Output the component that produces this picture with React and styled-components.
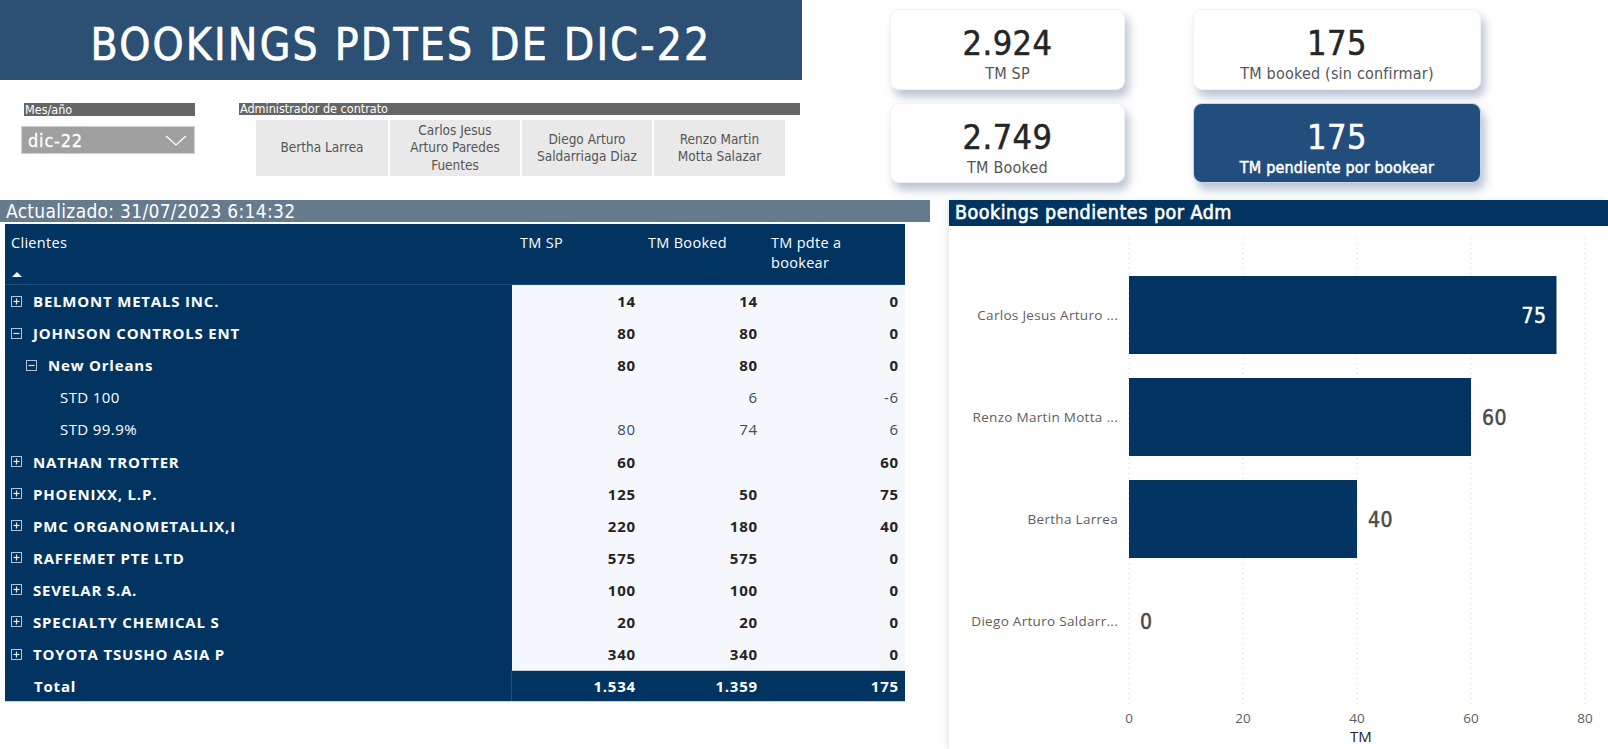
import React from "react";
import styled, { createGlobalStyle } from "styled-components";

const GlobalStyle = createGlobalStyle`
  body {
    margin: 0;
    background: #ffffff;
    font-family: "Open Sans", "Liberation Sans", sans-serif;
  }
`;

const din = `"DejaVu Sans Condensed", "Liberation Sans Narrow", "Roboto", sans-serif`;
const navy = "#023462";

const Page = styled.div`
  width: 1608px;
  height: 749px;
  overflow: hidden;
  background: #fff;
`;

const TopRow = styled.div`
  display: flex;
  height: 200px;
`;

const Header = styled.div`
  width: 802px;
`;

const Banner = styled.div`
  height: 80px;
  box-sizing: border-box;
  padding-top: 9px;
  background: #2b5073;
  display: flex;
  align-items: center;
  justify-content: center;
`;

const Title = styled.h1`
  margin: 0;
  color: #fff;
  font-family: ${din};
  font-weight: 400;
  font-size: 44px;
  letter-spacing: 2.2px;
  -webkit-text-stroke: 0.7px #fff;
`;

const Filters = styled.div`
  display: flex;
  padding-top: 23px;
`;

const Slicer = styled.div`
  margin-left: ${(p) => p.left}px;
  width: ${(p) => p.width}px;
`;

const SlicerLabel = styled.div`
  background: #666666;
  color: #fff;
  height: ${(p) => p.h || 13}px;
  margin-left: ${(p) => p.indent || 0}px;
  font-family: ${din};
  font-size: 12.5px;
  line-height: ${(p) => p.h || 13}px;
  padding-left: 1px;
  white-space: nowrap;
`;

const Dropdown = styled.div`
  margin-top: 10px;
  height: 28px;
  box-sizing: border-box;
  background: #a0a0a0;
  border: 1px solid #d0d0d0;
  display: flex;
  align-items: center;
  justify-content: space-between;
  padding: 0 7px 0 6px;
  color: #fff;
  font-family: ${din};
  font-size: 18px;
  letter-spacing: 0.8px;
  -webkit-text-stroke: 0.3px #fff;
`;

const ButtonRow = styled.div`
  display: flex;
  gap: 2px;
  margin-top: 5px;
  padding-left: 17px;
`;

const AdminButton = styled.div`
  width: ${(p) => p.width}px;
  height: 56px;
  background: #e9e9e9;
  color: #555;
  font-family: ${din};
  font-size: 13.5px;
  line-height: 17.5px;
  display: flex;
  align-items: center;
  justify-content: center;
  text-align: center;
  padding: 0 10px;
  box-sizing: border-box;
`;

const Cards = styled.div`
  margin-left: 88px;
  margin-top: 9px;
  display: grid;
  grid-template-columns: 235px 288px;
  grid-template-rows: 81px 80px;
  column-gap: 68px;
  row-gap: 13px;
  align-self: flex-start;
`;

const Card = styled.div`
  border-radius: 9px;
  background: ${(p) => (p.dark ? "#214e7d" : "#ffffff")};
  border: 1px solid ${(p) => (p.dark ? "#c9d6e4" : "#eef1f5")};
  box-shadow: 4px 7px 10px rgba(70, 100, 140, 0.38);
  display: flex;
  flex-direction: column;
  align-items: center;
  justify-content: center;
  color: ${(p) => (p.dark ? "#fff" : "#252525")};
  font-family: ${din};
`;

const CardValue = styled.div`
  font-size: 34px;
  line-height: 38px;
  letter-spacing: 0.5px;
  margin-top: 9px;
  -webkit-text-stroke: 0.5px currentColor;
`;

const CardLabel = styled.div`
  font-size: 16px;
  line-height: 20px;
  margin-top: 2px;
  color: ${(p) => (p.dark ? "#fff" : "#555")};
  letter-spacing: 0.2px;
  -webkit-text-stroke: ${(p) => (p.dark ? "0.5px #fff" : "0")};
`;

const BottomRow = styled.div`
  display: flex;
`;

const TablePanel = styled.div`
  width: 930px;
`;

const UpdatedBar = styled.div`
  height: 22px;
  background: #677b8e;
  color: #fff;
  font-family: ${din};
  font-size: 19px;
  line-height: 22px;
  padding-left: 6px;
  letter-spacing: 0.3px;
`;

const Table = styled.div`
  margin: 2px 0 0 5px;
  width: 900px;
  display: grid;
  grid-template-columns: 507px 130px 122px 141px;
  border-bottom: 1px solid #c5cfdb;
`;

const HeadCell = styled.div`
  background: ${navy};
  color: #fff;
  height: 61px;
  box-sizing: border-box;
  padding: 9px 0 0 ${(p) => p.pad || 7}px;
  font-size: 14.5px;
  line-height: 20px;
  letter-spacing: 0.3px;
  border-bottom: 1px solid #1f4d7a;
`;

const SortArrow = styled.div`
  width: 0;
  height: 0;
  margin-top: 19px;
  margin-left: 1px;
  border-left: 5px solid transparent;
  border-right: 5px solid transparent;
  border-bottom: 5px solid #fff;
`;

const NameCell = styled.div`
  background: ${navy};
  color: #fff;
  height: ${(p) => (p.total ? 31 : 32.1)}px;
  display: flex;
  align-items: center;
  padding-left: ${(p) => p.indent}px;
  font-size: 15px;
  font-weight: ${(p) => (p.bold ? 700 : 400)};
  letter-spacing: ${(p) => (p.bold ? 0.8 : 0.4)}px;
  white-space: nowrap;
  border-right: ${(p) => (p.total ? "1px solid #234f7d" : "none")};
`;

const ValueCell = styled.div`
  background: ${(p) => (p.total ? navy : "#f4f7fc")};
  color: ${(p) => (p.total ? "#fff" : p.bold ? "#252423" : "#3c4a6a")};
  height: ${(p) => (p.total ? 31 : 32.1)}px;
  display: flex;
  align-items: center;
  justify-content: flex-end;
  padding-right: 6px;
  font-size: 15px;
  font-weight: ${(p) => (p.bold ? 700 : 400)};
  letter-spacing: 0.8px;
  border-top: ${(p) => (p.total ? "1px solid #c5cfdb" : "none")};
  box-sizing: border-box;
`;

const Toggle = styled.svg`
  width: 11px;
  height: 11px;
  margin-right: 11px;
  flex: none;
`;

const ChartPanel = styled.div`
  margin-left: 19px;
  flex: 1;
  box-shadow: -3px 0 5px rgba(0, 0, 0, 0.08);
`;

const ChartTitle = styled.div`
  height: 26px;
  background: ${navy};
  color: #fff;
  font-family: ${din};
  font-size: 19.5px;
  line-height: 26px;
  padding-left: 6px;
  letter-spacing: 0.5px;
  -webkit-text-stroke: 0.6px #fff;
`;

const ChartSvg = styled.svg`
  display: block;
  width: 659px;
  height: 523px;
`;

const ExpandIcon = ({ open }) => (
  <Toggle viewBox="0 0 11 11">
    <rect x="0.5" y="0.5" width="10" height="10" fill="none" stroke="#b9c4d2" strokeWidth="1" />
    <line x1="2.5" y1="5.5" x2="8.5" y2="5.5" stroke="#e4e9f0" strokeWidth="1.2" />
    {!open && <line x1="5.5" y1="2.5" x2="5.5" y2="8.5" stroke="#e4e9f0" strokeWidth="1.2" />}
  </Toggle>
);

const rows = [
  { name: "BELMONT METALS INC.", level: 1, sp: "14", bk: "14", pd: "0" },
  { name: "JOHNSON CONTROLS ENT", level: 1, open: true, sp: "80", bk: "80", pd: "0" },
  { name: "New Orleans", level: 2, open: true, sp: "80", bk: "80", pd: "0" },
  { name: "STD 100", level: 3, sp: "", bk: "6", pd: "-6" },
  { name: "STD 99.9%", level: 3, sp: "80", bk: "74", pd: "6" },
  { name: "NATHAN TROTTER", level: 1, sp: "60", bk: "", pd: "60" },
  { name: "PHOENIXX, L.P.", level: 1, sp: "125", bk: "50", pd: "75" },
  { name: "PMC ORGANOMETALLIX,I", level: 1, sp: "220", bk: "180", pd: "40" },
  { name: "RAFFEMET PTE LTD", level: 1, sp: "575", bk: "575", pd: "0" },
  { name: "SEVELAR S.A.", level: 1, sp: "100", bk: "100", pd: "0" },
  { name: "SPECIALTY CHEMICAL S", level: 1, sp: "20", bk: "20", pd: "0" },
  { name: "TOYOTA TSUSHO ASIA P", level: 1, sp: "340", bk: "340", pd: "0" },
];

const indents = { 1: 6, 2: 21, 3: 55 };

const bars = [
  { label: "Carlos Jesus Arturo ...", value: 75 },
  { label: "Renzo Martin Motta ...", value: 60 },
  { label: "Bertha Larrea", value: 40 },
  { label: "Diego Arturo Saldarr...", value: 0 },
];

const Chart = () => {
  const x0 = 180;
  const unit = 5.7;
  const ticks = [0, 20, 40, 60, 80];
  return (
    <ChartSvg viewBox="0 0 659 523">
      {ticks.map((t) => (
        <line
          key={t}
          x1={x0 + t * unit}
          x2={x0 + t * unit}
          y1="12"
          y2="480"
          stroke="#cfcfcf"
          strokeWidth="1"
          strokeDasharray="1 4"
        />
      ))}
      {bars.map((b, i) => {
        const cy = 89 + i * 102;
        const w = b.value * unit;
        const inside = b.value >= 70;
        return (
          <g key={b.label}>
            <text
              x="169"
              y={cy + 5}
              textAnchor="end"
              fontFamily="'Open Sans', sans-serif"
              fontSize="13.5"
              letterSpacing="0.3"
              fill="#605e5c"
            >
              {b.label}
            </text>
            {w > 0 && <rect x={x0} y={cy - 39} width={w} height="78" fill={navy} />}
            <text
              x={inside ? x0 + w - 10 : x0 + w + 11}
              y={cy + 8}
              textAnchor={inside ? "end" : "start"}
              fontFamily={din}
              fontSize="21"
              letterSpacing="0.5"
              fill={inside ? "#fff" : "#4a4a4a"}
              stroke={inside ? "#fff" : "#4a4a4a"}
              strokeWidth="0.5"
            >
              {b.value}
            </text>
          </g>
        );
      })}
      {ticks.map((t) => (
        <text
          key={"l" + t}
          x={x0 + t * unit}
          y="497"
          textAnchor="middle"
          fontFamily="'Open Sans', sans-serif"
          fontSize="13.5"
          fill="#605e5c"
        >
          {t}
        </text>
      ))}
      <text
        x="412"
        y="516"
        textAnchor="middle"
        fontFamily="'Open Sans', sans-serif"
        fontSize="15"
        fill="#252423"
      >
        TM
      </text>
    </ChartSvg>
  );
};

const App = () => {
  return (
    <Page>
      <GlobalStyle />
      <TopRow>
        <Header>
          <Banner>
            <Title>BOOKINGS PDTES DE DIC-22</Title>
          </Banner>
          <Filters>
            <Slicer left={21} width={174}>
              <SlicerLabel indent={3}>Mes/año</SlicerLabel>
              <Dropdown>
                <span>dic-22</span>
                <svg width="22" height="11" viewBox="0 0 22 11">
                  <polyline points="1,1 11,10 21,1" fill="none" stroke="#fff" strokeWidth="1.3" />
                </svg>
              </Dropdown>
            </Slicer>
            <Slicer left={44} width={561}>
              <SlicerLabel h={12}>Administrador de contrato</SlicerLabel>
              <ButtonRow>
                <AdminButton width={132}>Bertha Larrea</AdminButton>
                <AdminButton width={130}>Carlos Jesus Arturo Paredes Fuentes</AdminButton>
                <AdminButton width={130}>Diego Arturo Saldarriaga Diaz</AdminButton>
                <AdminButton width={131}>Renzo Martin Motta Salazar</AdminButton>
              </ButtonRow>
            </Slicer>
          </Filters>
        </Header>
        <Cards>
          <Card>
            <CardValue>2.924</CardValue>
            <CardLabel>TM SP</CardLabel>
          </Card>
          <Card>
            <CardValue>175</CardValue>
            <CardLabel>TM booked (sin confirmar)</CardLabel>
          </Card>
          <Card>
            <CardValue>2.749</CardValue>
            <CardLabel>TM Booked</CardLabel>
          </Card>
          <Card dark>
            <CardValue>175</CardValue>
            <CardLabel dark>TM pendiente por bookear</CardLabel>
          </Card>
        </Cards>
      </TopRow>
      <BottomRow>
        <TablePanel>
          <UpdatedBar>Actualizado: 31/07/2023 6:14:32</UpdatedBar>
          <Table>
            <HeadCell pad={6}>
              Clientes
              <SortArrow />
            </HeadCell>
            <HeadCell pad={8}>TM SP</HeadCell>
            <HeadCell pad={6}>TM Booked</HeadCell>
            <HeadCell pad={7}>
              TM pdte a
              <br />
              bookear
            </HeadCell>
            {rows.map((r) => {
              const bold = r.level < 3;
              return (
                <React.Fragment key={r.name}>
                  <NameCell indent={indents[r.level]} bold={bold}>
                    {r.level < 3 && <ExpandIcon open={r.open} />}
                    {r.name}
                  </NameCell>
                  <ValueCell bold={bold}>{r.sp}</ValueCell>
                  <ValueCell bold={bold}>{r.bk}</ValueCell>
                  <ValueCell bold={bold}>{r.pd}</ValueCell>
                </React.Fragment>
              );
            })}
            <NameCell indent={29} bold total>
              Total
            </NameCell>
            <ValueCell bold total>1.534</ValueCell>
            <ValueCell bold total>1.359</ValueCell>
            <ValueCell bold total>175</ValueCell>
          </Table>
        </TablePanel>
        <ChartPanel>
          <ChartTitle>Bookings pendientes por Adm</ChartTitle>
          <Chart />
        </ChartPanel>
      </BottomRow>
    </Page>
  );
};

export default App;
